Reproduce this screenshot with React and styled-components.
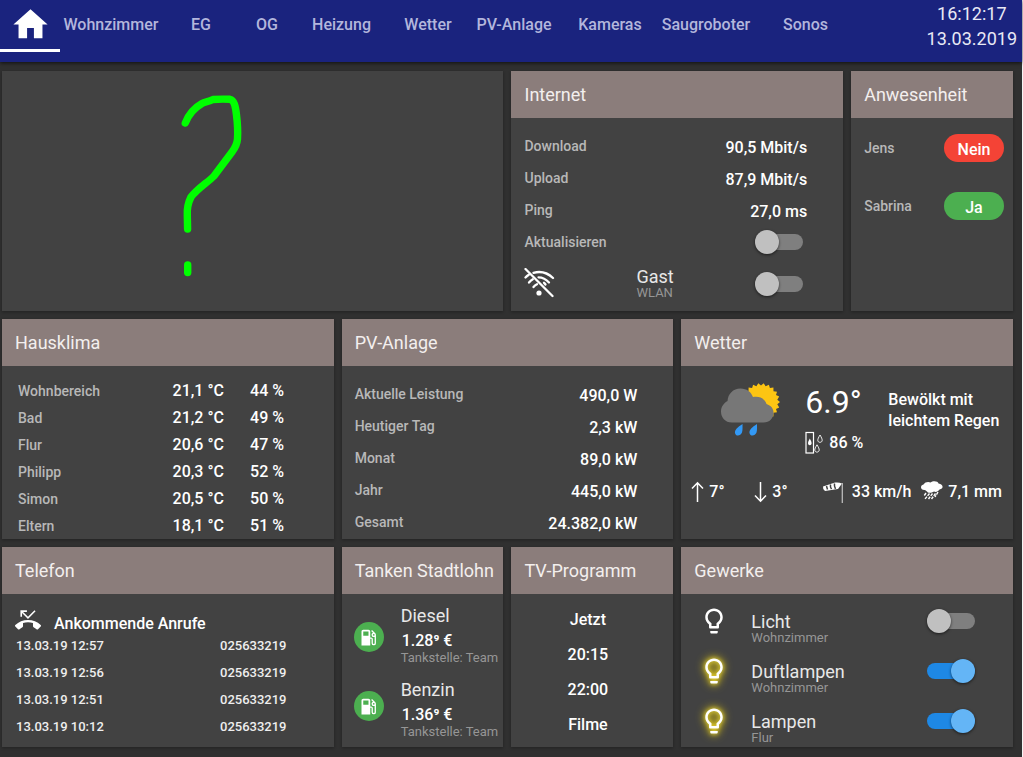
import React, { useState } from 'react';
import styled, { createGlobalStyle, css } from 'styled-components';
import {
  MdHome,
  MdLightbulbOutline,
  MdLocalGasStation,
  MdPhoneMissed,
} from 'react-icons/md';

const GlobalStyle = createGlobalStyle`
  * {
    box-sizing: border-box;
  }
  body {
    margin: 0;
    background: #f4f4f4;
    font-family: Roboto, sans-serif;
    color: #fff;
  }
  button {
    font-family: inherit;
    border: none;
    cursor: pointer;
  }
`;

const Page = styled.div`
  min-height: 100vh;
  margin-right: 1px;
  background: #303030;
`;

const Header = styled.header`
  display: flex;
  justify-content: space-between;
  height: 62px;
  background: #1a237e;
  box-shadow: 0 1px 4px rgba(0, 0, 0, 0.7);
`;

const Tabs = styled.nav`
  display: grid;
  grid-template-columns: 60px 102px 78px 54px 95px 78px 94px 98px 94px 105px;
  height: 52px;
`;

const Tab = styled.button`
  display: flex;
  align-items: center;
  justify-content: center;
  padding: 0 0 3px;
  background: transparent;
  color: #b3b6dc;
  font-size: 16px;
  font-weight: 500;
  line-height: 20px;
  white-space: nowrap;
  ${(props) =>
    props.$active &&
    css`
      padding: 0;
      color: #fff;
      border-bottom: 3px solid #fff;
    `}
`;

const Clock = styled.div`
  padding: 1px 5px 0 0;
  text-align: center;
  font-size: 18px;
  line-height: 25px;
  color: #e8e9f5;
`;

const Board = styled.main`
  display: grid;
  grid-template-columns: repeat(6, minmax(0, 1fr));
  grid-template-rows: minmax(240px, auto) minmax(220px, auto) minmax(200px, auto);
  gap: 8px;
  padding: 9px 9px 10px 2px;
`;

const Card = styled.section`
  grid-column: span ${(props) => props.$span || 1};
  background: #424242;
  box-shadow: 0 1px 3px rgba(0, 0, 0, 0.3);
`;

const CardTitle = styled.h2`
  margin: 0;
  padding: 0 13px;
  background: #8b7d7b;
  color: #f3efee;
  font-size: 18px;
  font-weight: 400;
  line-height: 47px;
  white-space: nowrap;
`;

const Sketch = styled.div`
  padding: 14px 0 0 168px;
`;

const ValueList = styled.table`
  width: 100%;
  margin-top: 12px;
  border-collapse: collapse;

  th,
  td {
    height: 32px;
    padding: 0;
    line-height: 20px;
    white-space: nowrap;
  }
  th {
    padding-left: 13px;
    text-align: left;
    font-size: 14px;
    font-weight: 500;
    color: #b8b8b8;
  }
  td {
    padding: 4px 36px 0 0;
    text-align: right;
    font-size: 16px;
    font-weight: 500;
  }
`;

const ClimateTable = styled.table`
  margin: 11px 0 0 16px;
  border-collapse: collapse;

  th,
  td {
    height: 27px;
    padding: 0;
    line-height: 20px;
    white-space: nowrap;
  }
  th {
    width: 146px;
    text-align: left;
    font-size: 14px;
    font-weight: 500;
    color: #b8b8b8;
  }
  td {
    width: 60px;
    text-align: right;
    font-size: 16px;
    font-weight: 500;
  }
`;

const SettingRow = styled.div`
  display: flex;
  align-items: center;
  justify-content: space-between;
  height: 32px;
  padding: 0 40px 0 13px;
  font-size: 14px;
  font-weight: 500;
  line-height: 20px;
  color: #b8b8b8;
`;

const DeviceList = styled.div`
  padding-top: 2px;
`;

const DeviceRow = styled.div`
  display: grid;
  grid-template-columns: ${(props) => props.$iconWidth}px 1fr 48px;
  align-items: center;
  height: 50px;
  padding-right: 38px;
  padding-left: ${(props) => props.$indent || 0}px;
`;

const GuestRow = styled(DeviceRow)`
  height: 52px;
  padding-right: 40px;
`;

const DeviceLabel = styled.label`
  display: flex;
  flex-direction: column;
  align-self: start;
  padding-top: ${(props) => props.$top || 16}px;
  font-size: 18px;
  line-height: 20px;
  color: #e8e8e8;
`;

const Sub = styled.small`
  font-size: 13px;
  line-height: 12px;
  color: #969696;
`;

const Toggle = styled.input.attrs({ type: 'checkbox', role: 'switch' })`
  appearance: none;
  position: relative;
  width: 48px;
  height: 16px;
  margin: 0;
  border-radius: 8px;
  background: #7f7f7f;
  cursor: pointer;

  &::before {
    content: '';
    position: absolute;
    top: -4px;
    left: 0;
    width: 24px;
    height: 24px;
    border-radius: 50%;
    background: #c0c0c0;
    box-shadow: 0 1px 3px rgba(0, 0, 0, 0.6);
  }
  &:checked {
    background: #1e88e5;
  }
  &:checked::before {
    left: 24px;
    background: #64b5f6;
  }
`;

const PresenceList = styled.ul`
  display: flex;
  flex-direction: column;
  gap: 30px;
  margin: 0;
  padding: 16px 9px 0 13px;
  list-style: none;
`;

const Presence = styled.li`
  display: flex;
  align-items: center;
  justify-content: space-between;
  font-size: 14px;
  font-weight: 500;
  color: #b8b8b8;
`;

const Pill = styled.button`
  width: 60px;
  height: 28px;
  padding: 2px 0 0;
  border-radius: 14px;
  background: ${(props) => (props.$home ? '#4caf50' : '#f44336')};
  color: #fff;
  font-size: 16px;
  font-weight: 500;
`;

const WeatherNow = styled.div`
  display: grid;
  grid-template-columns: 62px 60px auto;
  justify-content: start;
  column-gap: 23px;
  padding: 14px 0 0 39px;
`;

const Temperature = styled.div`
  padding-bottom: 7px;
  font-size: 32px;
  line-height: 44px;
`;

const Reading = styled.div`
  display: flex;
  align-items: center;
  gap: ${(props) => props.$gap || 5}px;
  font-size: 16px;
  font-weight: 500;
  line-height: 24px;
  white-space: nowrap;
`;

const Condition = styled.p`
  margin: 0;
  padding-top: 9px;
  font-size: 16px;
  font-weight: 500;
  line-height: 21px;
  white-space: nowrap;
`;

const WeatherDetails = styled.div`
  display: grid;
  grid-template-columns: 54px 1fr auto auto;
  column-gap: 9px;
  padding: 25px 11px 0 10px;
`;

const CallHeading = styled.h3`
  display: flex;
  align-items: center;
  gap: 13px;
  height: 38px;
  margin: 0;
  padding: 14px 13px 0;
  font-size: 16px;
  font-weight: 500;

  span {
    padding-top: 6px;
  }
`;

const CallTable = styled.table`
  margin-left: 14px;
  border-collapse: collapse;

  td {
    height: 27px;
    padding: 0;
    font-size: 13px;
    font-weight: 500;
    line-height: 16px;
    color: #eee;
  }
  td:first-child {
    width: 204px;
  }
`;

const FuelBody = styled.div`
  display: flex;
  gap: 17px;
  padding: 10px 0 0 12px;
`;

const FuelIcons = styled.div`
  display: flex;
  flex-direction: column;
  gap: 39px;
  padding-top: 18px;
`;

const FuelBadge = styled.span`
  display: flex;
  align-items: center;
  justify-content: center;
  width: 30px;
  height: 30px;
  border-radius: 50%;
  background: #4caf50;
`;

const FuelList = styled.dl`
  display: flex;
  flex-direction: column;
  gap: 15px;
  margin: 0;
  white-space: nowrap;

  dt {
    font-size: 18px;
    line-height: 24px;
    color: #e8e8e8;
  }
  dd {
    margin: 0;
    font-size: 13px;
    line-height: 10px;
    color: #969696;
  }
`;

const Price = styled.dd`
  && {
    padding: 1px 0 0 1px;
    font-size: 16px;
    font-weight: 500;
    line-height: 24px;
    color: #fff;
  }
`;

const TvButtons = styled.div`
  display: flex;
  flex-direction: column;
  align-items: stretch;
  padding: 8px 9px 0 0;
`;

const TvButton = styled.button`
  height: 35px;
  padding: 0;
  background: transparent;
  color: #fff;
  font-size: 16px;
  font-weight: 500;
`;

const BulbSlot = styled.span`
  display: flex;
  justify-content: center;
  width: 30px;

  svg {
    filter: ${(props) =>
      props.$on
        ? 'drop-shadow(0 0 2px #ffeb3b) drop-shadow(0 0 4px #ffe000)'
        : 'none'};
  }
`;

const QuestionMark = () => (
  <svg width="90" height="200" viewBox="0 0 90 200" fill="none" stroke="#00ff00" strokeWidth="7.4" strokeLinecap="round" strokeLinejoin="round">
    <path d="M15.3 38C18 31 24 23 32 18.500C35 17 39 16.500 43 14.500C49 14 55 14 60 14.300C64 15 65.500 21 66.500 30C67.500 38 68 46 67.500 54C67 60 65 63 62 67L44 91C37 98 28 103 21 112C18 118 17 124 17.300 130L17.600 144" />
    <path d="M17.700 180v7.500" />
  </svg>
);

const WifiOffIcon = () => (
  <svg width="32" height="32" viewBox="0 0 32 32" fill="none" stroke="#fff" strokeWidth="2.300" strokeLinecap="round">
    <path d="M1.500 1L28.500 28" />
    <path d="M1.500 9.500Q3 7.800 4.800 6.700M9.500 4.800Q20.500 1.800 29 10" />
    <path d="M5 14.500Q6.800 12.300 8.800 11.200M14.500 9.300Q20.500 9.300 25 14.500" />
    <path d="M9.500 19Q11 17.200 13 16.300M20 14.800Q20.800 15.500 21.500 16.500" />
    <circle cx="15" cy="25" r="2.600" fill="#fff" stroke="none" />
  </svg>
);

const sunPoints = Array.from({ length: 44 }, (_, i) => {
  const r = i % 2 ? 16.5 : 19;
  const a = (i * Math.PI) / 22;
  return `${(41 + r * Math.cos(a)).toFixed(1)},${(22 + r * Math.sin(a)).toFixed(1)}`;
}).join(' ');

const RainCloudIcon = () => (
  <svg width="62" height="60" viewBox="0 0 62 60">
    <polygon points={sunPoints} fill="#fdc513" />
    <path d="M12 42.500C5 42.500 1 37.500 1 31.500C1 26.500 4 23 7.500 21C8 14 13 8.500 20.500 8.500C27 8.500 31 12 33 17C40 15.500 45 19 46.500 24C51 25.500 53.500 28.500 53.500 32.500C53.500 38.500 49.500 42.500 43.500 42.500Z" fill="#777" />
    <path d="M22.500 44C17.500 47 14.500 50 15 53C15.500 56.500 20.500 56.500 22 52.500C22.800 50 22.500 47 22.500 44ZM37 44C32 47 29 50 29.500 53C30 56.500 35 56.500 36.500 52.500C37.300 50 37 47 37 44Z" fill="#3399f5" />
  </svg>
);

const HumidityIcon = () => (
  <svg width="19" height="24" viewBox="0 0 19 24" fill="none" stroke="#fff">
    <rect x="1" y="1.500" width="7.500" height="20.500" strokeWidth="1.200" />
    <path d="M4.800 7.500C3.800 9.500 3 10.800 3 12.200C3 14.800 6.600 14.800 6.600 12.200C6.600 10.800 5.800 9.500 4.800 7.500Z" fill="#fff" stroke="none" />
    <path d="M15 4C13.500 6.500 12.800 8 12.800 9.300C12.800 12 17.200 12 17.200 9.300C17.200 8 16.500 6.500 15 4ZM12 13.800C10.500 16.300 9.800 17.800 9.800 19C9.800 21.800 14.200 21.800 14.200 19C14.200 17.800 13.500 16.300 12 13.800Z" strokeWidth="0.900" />
  </svg>
);

const ArrowIcon = ({ down }) => (
  <svg width="13" height="22" viewBox="0 0 13 22" fill="none" stroke="#fff" strokeWidth="1.500">
    {down ? (
      <path d="M6.500 1V20M1 14.500L6.500 20.200L12 14.500" />
    ) : (
      <path d="M6.500 21V2M1 7.500L6.500 1.800L12 7.500" />
    )}
  </svg>
);

const WindsockIcon = () => (
  <svg width="22" height="24" viewBox="0 0 22 24">
    <path d="M1 6.500L13 2.500Q17 2 20 3.500L16 9L3 11Q0.500 9 1 6.500Z" fill="#fff" />
    <path d="M4.500 6L5.500 9.500M8.500 4.500Q8 7 9.500 9.200M12.500 3.500Q12 6 13.500 8.800" stroke="#424242" strokeWidth="1.500" fill="none" />
    <path d="M20.300 3V23" stroke="#bbb" strokeWidth="1.300" />
  </svg>
);

const RainIcon = () => (
  <svg width="23" height="22" viewBox="0 0 23 22">
    <path d="M5 9C0.500 9.500 -0.500 4.500 3.500 3.500C5 0.500 9 0.500 10.500 1.500C13 -0.500 18 0 18.500 2.500C23.500 3 24 8 19.500 8.500C18 10.500 16 11.500 14 10.500C11 12.500 7.500 12 7 10.500Z" fill="#fff" />
    <path d="M6 12L4 15M9.500 12.500L5 18M12.500 12.500L8.500 18M15.500 12.500L11.500 18M18 11L15 16" stroke="#fff" strokeWidth="1.400" strokeDasharray="3 1" />
  </svg>
);

const tabs = ['Wohnzimmer', 'EG', 'OG', 'Heizung', 'Wetter', 'PV-Anlage', 'Kameras', 'Saugroboter', 'Sonos'];

const internet = [
  ['Download', '90,5 Mbit/s'],
  ['Upload', '87,9 Mbit/s'],
  ['Ping', '27,0 ms'],
];

const climate = [
  ['Wohnbereich', '21,1 °C', '44 %'],
  ['Bad', '21,2 °C', '49 %'],
  ['Flur', '20,6 °C', '47 %'],
  ['Philipp', '20,3 °C', '52 %'],
  ['Simon', '20,5 °C', '50 %'],
  ['Eltern', '18,1 °C', '51 %'],
];

const solar = [
  ['Aktuelle Leistung', '490,0 W'],
  ['Heutiger Tag', '2,3 kW'],
  ['Monat', '89,0 kW'],
  ['Jahr', '445,0 kW'],
  ['Gesamt', '24.382,0 kW'],
];

const calls = ['13.03.19 12:57', '13.03.19 12:56', '13.03.19 12:51', '13.03.19 10:12'];

const fuels = [
  ['Diesel', '1.28⁹ €'],
  ['Benzin', '1.36⁹ €'],
];

const lights = [
  { id: 'licht', name: 'Licht', room: 'Wohnzimmer' },
  { id: 'duft', name: 'Duftlampen', room: 'Wohnzimmer' },
  { id: 'lampen', name: 'Lampen', room: 'Flur' },
];

const Values = ({ rows }) => (
  <ValueList>
    <tbody>
      {rows.map(([label, value]) => (
        <tr key={label}>
          <th scope="row">{label}</th>
          <td>{value}</td>
        </tr>
      ))}
    </tbody>
  </ValueList>
);

const App = () => {
  const [active, setActive] = useState('Home');
  const [on, setOn] = useState({ duft: true, lampen: true });

  const toggle = (id) => setOn({ ...on, [id]: !on[id] });

  return (
    <Page>
      <GlobalStyle />
      <Header>
        <Tabs>
          <Tab $active={active === 'Home'} aria-label="Home" onClick={() => setActive('Home')}>
            <MdHome size={41} />
          </Tab>
          {tabs.map((tab) => (
            <Tab key={tab} $active={active === tab} onClick={() => setActive(tab)}>
              {tab}
            </Tab>
          ))}
        </Tabs>
        <Clock>
          <div>16:12:17</div>
          <div>13.03.2019</div>
        </Clock>
      </Header>

      <Board>
        <Card $span={3}>
          <Sketch>
            <QuestionMark />
          </Sketch>
        </Card>

        <Card $span={2}>
          <CardTitle>Internet</CardTitle>
          <Values rows={internet} />
          <SettingRow>
            <label htmlFor="refresh">Aktualisieren</label>
            <Toggle id="refresh" checked={!!on.refresh} onChange={() => toggle('refresh')} />
          </SettingRow>
          <GuestRow $iconWidth={112} $indent={13}>
            <WifiOffIcon />
            <DeviceLabel htmlFor="guest" $top={9}>
              Gast
              <Sub>WLAN</Sub>
            </DeviceLabel>
            <Toggle id="guest" checked={!!on.guest} onChange={() => toggle('guest')} />
          </GuestRow>
        </Card>

        <Card>
          <CardTitle>Anwesenheit</CardTitle>
          <PresenceList>
            <Presence>
              Jens <Pill>Nein</Pill>
            </Presence>
            <Presence>
              Sabrina <Pill $home>Ja</Pill>
            </Presence>
          </PresenceList>
        </Card>

        <Card $span={2}>
          <CardTitle>Hausklima</CardTitle>
          <ClimateTable>
            <tbody>
              {climate.map(([room, temp, humidity]) => (
                <tr key={room}>
                  <th scope="row">{room}</th>
                  <td>{temp}</td>
                  <td>{humidity}</td>
                </tr>
              ))}
            </tbody>
          </ClimateTable>
        </Card>

        <Card $span={2}>
          <CardTitle>PV-Anlage</CardTitle>
          <Values rows={solar} />
        </Card>

        <Card $span={2}>
          <CardTitle>Wetter</CardTitle>
          <WeatherNow>
            <RainCloudIcon />
            <div>
              <Temperature>6.9°</Temperature>
              <Reading>
                <HumidityIcon />
                86 %
              </Reading>
            </div>
            <Condition>
              Bewölkt mit
              <br />
              leichtem Regen
            </Condition>
          </WeatherNow>
          <WeatherDetails>
            <Reading>
              <ArrowIcon />
              7°
            </Reading>
            <Reading>
              <ArrowIcon down />
              3°
            </Reading>
            <Reading $gap={8}>
              <WindsockIcon />
              33 km/h
            </Reading>
            <Reading>
              <RainIcon />
              7,1 mm
            </Reading>
          </WeatherDetails>
        </Card>

        <Card $span={2}>
          <CardTitle>Telefon</CardTitle>
          <CallHeading>
            <MdPhoneMissed size={26} />
            <span>Ankommende Anrufe</span>
          </CallHeading>
          <CallTable>
            <tbody>
              {calls.map((time) => (
                <tr key={time}>
                  <td>{time}</td>
                  <td>025633219</td>
                </tr>
              ))}
            </tbody>
          </CallTable>
        </Card>

        <Card>
          <CardTitle>Tanken Stadtlohn</CardTitle>
          <FuelBody>
            <FuelIcons>
              {fuels.map(([name]) => (
                <FuelBadge key={name}>
                  <MdLocalGasStation size={21} />
                </FuelBadge>
              ))}
            </FuelIcons>
            <FuelList>
              {fuels.map(([name, price]) => (
                <div key={name}>
                  <dt>{name}</dt>
                  <Price>{price}</Price>
                  <dd>Tankstelle: Team</dd>
                </div>
              ))}
            </FuelList>
          </FuelBody>
        </Card>

        <Card>
          <CardTitle>TV-Programm</CardTitle>
          <TvButtons>
            {['Jetzt', '20:15', '22:00', 'Filme'].map((slot) => (
              <TvButton key={slot}>{slot}</TvButton>
            ))}
          </TvButtons>
        </Card>

        <Card $span={2}>
          <CardTitle>Gewerke</CardTitle>
          <DeviceList>
            {lights.map(({ id, name, room }) => (
              <DeviceRow key={id} $iconWidth={52} $indent={18}>
                <BulbSlot $on={on[id]}>
                  <MdLightbulbOutline size={30} />
                </BulbSlot>
                <DeviceLabel htmlFor={id}>
                  {name}
                  <Sub>{room}</Sub>
                </DeviceLabel>
                <Toggle id={id} checked={!!on[id]} onChange={() => toggle(id)} />
              </DeviceRow>
            ))}
          </DeviceList>
        </Card>
      </Board>
    </Page>
  );
};

export default App;
